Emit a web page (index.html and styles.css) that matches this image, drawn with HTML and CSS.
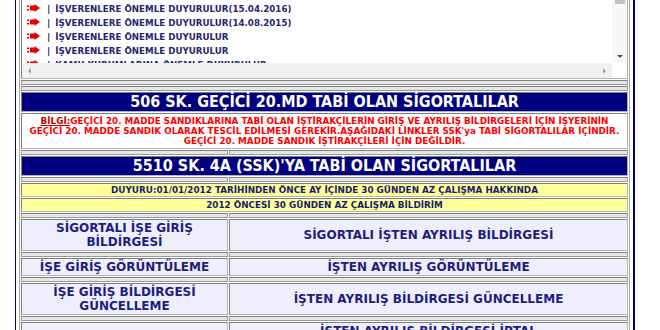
FILE: index.html
```html
<!DOCTYPE html>
<html>
<head>
  <meta charset="utf-8">
  <title>E-Sigorta</title>
  <link rel="stylesheet" href="styles.css">
</head>
<body>

  <div class="frame">
    <div class="tbl">

      <!-- duyurular kutusu -->
      <div class="cell span scroll-cell">
        <div class="scroll-main">
          <ul class="news">
            <li><span class="arrow"><svg width="13" height="8" viewBox="0 0 13 8"><rect x="0" y="1.5" width="2" height="1.5"/><rect x="0" y="5" width="2" height="1.5"/><rect x="3" y="1.5" width="5" height="5"/><polygon points="7.5,0 13,4 7.5,8"/></svg></span><span class="pipe">|</span><a href="#">İŞVERENLERE ÖNEMLE DUYURULUR(15.04.2016)</a></li>
            <li><span class="arrow"><svg width="13" height="8" viewBox="0 0 13 8"><rect x="0" y="1.5" width="2" height="1.5"/><rect x="0" y="5" width="2" height="1.5"/><rect x="3" y="1.5" width="5" height="5"/><polygon points="7.5,0 13,4 7.5,8"/></svg></span><span class="pipe">|</span><a href="#">İŞVERENLERE ÖNEMLE DUYURULUR(14.08.2015)</a></li>
            <li><span class="arrow"><svg width="13" height="8" viewBox="0 0 13 8"><rect x="0" y="1.5" width="2" height="1.5"/><rect x="0" y="5" width="2" height="1.5"/><rect x="3" y="1.5" width="5" height="5"/><polygon points="7.5,0 13,4 7.5,8"/></svg></span><span class="pipe">|</span><a href="#">İŞVERENLERE ÖNEMLE DUYURULUR</a></li>
            <li><span class="arrow"><svg width="13" height="8" viewBox="0 0 13 8"><rect x="0" y="1.5" width="2" height="1.5"/><rect x="0" y="5" width="2" height="1.5"/><rect x="3" y="1.5" width="5" height="5"/><polygon points="7.5,0 13,4 7.5,8"/></svg></span><span class="pipe">|</span><a href="#">İŞVERENLERE ÖNEMLE DUYURULUR</a></li>
            <li><span class="arrow"><svg width="13" height="8" viewBox="0 0 13 8"><rect x="0" y="1.5" width="2" height="1.5"/><rect x="0" y="5" width="2" height="1.5"/><rect x="3" y="1.5" width="5" height="5"/><polygon points="7.5,0 13,4 7.5,8"/></svg></span><span class="pipe">|</span><a href="#">KAMU KURUMLARINA ÖNEMLE DUYURULUR</a></li>
          </ul>
          <div class="vbar">
            <div class="thumb"></div>
            <div class="tri-down"></div>
          </div>
        </div>
        <div class="hbar-row">
          <div class="hbar">
            <div class="tri-left"></div>
            <div class="tri-right"></div>
          </div>
          <div class="corner"></div>
        </div>
      </div>

      <div class="band span"></div>
      <div class="band span"></div>

      <div class="cell span title">506 SK. GEÇİCİ 20.MD TABİ OLAN SİGORTALILAR</div>
      <div class="cell span info">
        <u>BİLGİ:</u>GEÇİCİ 20. MADDE SANDIKLARINA TABİ OLAN İŞTİRAKÇİLERİN GİRİŞ VE AYRILIŞ BİLDİRGELERİ İÇİN İŞYERİNİN<br>
        GEÇİCİ 20. MADDE SANDIK OLARAK TESCİL EDİLMESİ GEREKİR.AŞAĞIDAKİ LİNKLER SSK'ya TABİ SİGORTALILAR İÇİNDİR.<br>
        GEÇİCİ 20. MADDE SANDIK İŞTİRAKÇİLERİ İÇİN DEĞİLDİR.
      </div>

      <div class="band"></div><div class="band"></div>

      <div class="cell span title">5510 SK. 4A (SSK)'YA TABİ OLAN SİGORTALILAR</div>

      <div class="band"></div><div class="band"></div>

      <div class="cell span notice"><a href="#">DUYURU:01/01/2012 TARİHİNDEN ÖNCE AY İÇİNDE 30 GÜNDEN AZ ÇALIŞMA HAKKINDA</a></div>
      <div class="cell span notice"><a href="#">2012 ÖNCESİ 30 GÜNDEN AZ ÇALIŞMA BİLDİRİM</a></div>

      <div class="band"></div><div class="band"></div>

      <a class="cell link" href="#">SİGORTALI İŞE GİRİŞ BİLDİRGESİ</a>
      <a class="cell link" href="#">SİGORTALI İŞTEN AYRILIŞ BİLDİRGESİ</a>

      <div class="band"></div><div class="band"></div>

      <a class="cell link" href="#">İŞE GİRİŞ GÖRÜNTÜLEME</a>
      <a class="cell link" href="#">İŞTEN AYRILIŞ GÖRÜNTÜLEME</a>

      <div class="band"></div><div class="band"></div>

      <a class="cell link" href="#">İŞE GİRİŞ BİLDİRGESİ GÜNCELLEME</a>
      <a class="cell link" href="#">İŞTEN AYRILIŞ BİLDİRGESİ GÜNCELLEME</a>

      <div class="band"></div><div class="band"></div>

      <a class="cell link tall" href="#"></a>
      <a class="cell link tall" href="#">İŞTEN AYRILIŞ BİLDİRGESİ İPTAL</a>

    </div>
  </div>

</body>
</html>
```

FILE: styles.css
```css
html, body {
  overflow: hidden;
}
body {
  margin: 0;
  background: #fff;
  font-family: "DejaVu Sans", Verdana, sans-serif;
  font-weight: bold;
}
a {
  color: inherit;
  text-decoration: none;
}

.frame {
  margin-left: 15px;
  width: 620px;
  box-sizing: border-box;
  border-left: 1px solid #000080;
  border-right: 2px solid #000080;
  padding: 0 3px;
}
.tbl {
  border: 1px solid #a8a8a8;
  border-top: none;
  padding: 0 1px 1px;
  display: grid;
  grid-template-columns: 207px 1fr;
  gap: 1px;
}
.span {
  grid-column: 1 / 3;
}
.cell {
  border: 1px solid #9a9a9a;
  border-color: #7f7f7f #b4b4b4 #b4b4b4 #7f7f7f;
}
.band {
  height: 3px;
  border: 1px solid #9a9a9a;
  border-top-color: #808080;
  background: #e6e6e6;
}

/* duyurular kutusu */
.scroll-cell {
  border-top: none;
}
.scroll-main {
  display: flex;
  height: 63px;
}
.news {
  flex: 1;
  margin: 0;
  padding: 2px 0 0 5px;
  list-style: none;
  overflow: hidden;
  font-size: 8.7px;
  line-height: 14px;
  color: #26266e;
}
.news li {
  display: flex;
  align-items: center;
  white-space: nowrap;
}
.arrow {
  display: flex;
  margin-top: -3px;
}
.arrow svg {
  fill: #e30000;
}
.pipe {
  margin: 0 5px 0 7px;
  font-size: 9px;
}
.vbar {
  width: 15px;
  background: #f7f7f7;
  display: flex;
  flex-direction: column;
  align-items: center;
  justify-content: space-between;
  padding-bottom: 5px;
  box-sizing: border-box;
}
.thumb {
  width: 10px;
  height: 4px;
  background: #c2c2c2;
}
.tri-down {
  border-left: 3px solid transparent;
  border-right: 3px solid transparent;
  border-top: 3px solid #505050;
}
.hbar-row {
  display: flex;
  height: 15px;
}
.hbar {
  flex: 1;
  background: #f0f0f0;
  display: flex;
  align-items: center;
  justify-content: space-between;
  padding: 0 6px;
}
.tri-left {
  border-top: 3px solid transparent;
  border-bottom: 3px solid transparent;
  border-right: 3px solid #a3a3a3;
}
.tri-right {
  border-top: 3px solid transparent;
  border-bottom: 3px solid transparent;
  border-left: 3px solid #a3a3a3;
}
.corner {
  width: 15px;
  background: #fff;
}

/* basliklar */
.title {
  background: #000080;
  color: #fff;
  text-align: center;
  font-family: "DejaVu Sans Condensed", "DejaVu Sans", sans-serif;
  font-stretch: condensed;
  font-size: 16px;
  line-height: 18px;
}
.info {
  background: #fff;
  color: #ff0000;
  text-align: center;
  font-size: 8.8px;
  line-height: 10px;
  padding: 2px 0;
  white-space: nowrap;
}
.info u {
  color: #c40000;
}
.notice {
  background: #ffff99;
  color: #1c1c72;
  text-align: center;
  font-size: 8.8px;
  line-height: 12px;
}

/* linkler */
.link {
  background: #eeeefd;
  color: #1e1e7c;
  font-size: 12px;
  line-height: 14px;
  padding: 1px 16px;
  display: flex;
  align-items: center;
  justify-content: center;
  text-align: center;
}
.link.tall {
  align-items: flex-start;
  height: 40px;
}
```
